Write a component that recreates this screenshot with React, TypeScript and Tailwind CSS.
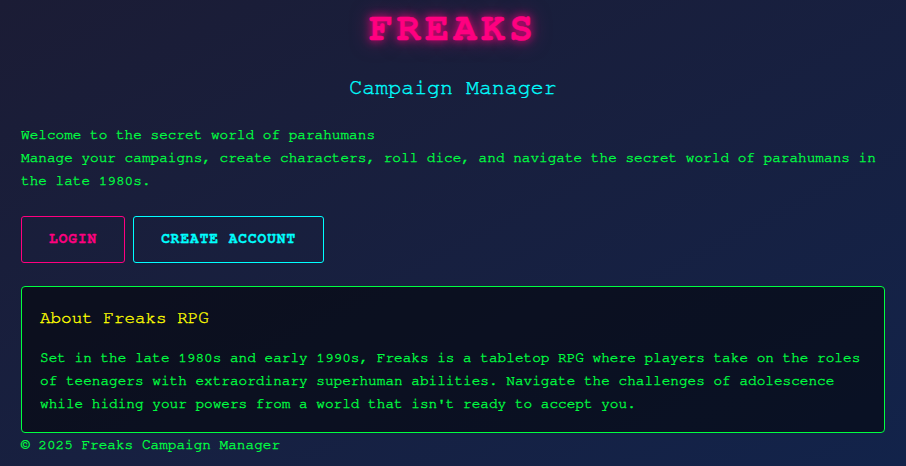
export default function App() {
  return (
    <div className="min-h-screen bg-gradient-to-br from-[#1b1c35] to-[#12234a] font-['FreeMono','Courier_New',monospace] text-[#00ff41]">
      <div className="px-[21px] [-webkit-text-stroke:0.35px_currentColor]">
        <h1 className="pt-[8px] text-center text-[40px] font-bold leading-none tracking-[4px] text-[#ff0080] [text-shadow:0_0_10px_#ff0080,0_0_20px_rgba(255,0,128,0.5)]">
          FREAKS
        </h1>
        <h2 className="mt-[29px] text-center text-[21.6px] leading-none text-[#00ffff]">
          Campaign Manager
        </h2>

        <div className="mt-[24px] text-[14.4px] leading-[23px]">
          <p>Welcome to the secret world of parahumans</p>
          <p>
            Manage your campaigns, create characters, roll dice, and navigate the secret world of
            parahumans in the late 1980s.
          </p>
        </div>

        <div className="mt-[24px] flex gap-[8px]">
          <button className="h-[47px] rounded-[3px] border border-[#ff0080] px-[27px] text-[14.4px] font-bold tracking-[1px] text-[#ff0080]">
            LOGIN
          </button>
          <button className="h-[47px] rounded-[3px] border border-[#00ffff] px-[27px] text-[14.4px] font-bold tracking-[1px] text-[#00ffff]">
            CREATE ACCOUNT
          </button>
        </div>

        <div className="mt-[23px] rounded-[4px] border border-[#00ff41] bg-black/50 px-[18px] pt-[21px] pb-[17px]">
          <h3 className="text-[17.6px] leading-[21px] text-[#ffff00]">About Freaks RPG</h3>
          <p className="mt-[17px] text-[14.4px] leading-[23px]">
            Set in the late 1980s and early 1990s, Freaks is a tabletop RPG where players take on
            the roles of teenagers with extraordinary superhuman abilities. Navigate the challenges
            of adolescence while hiding your powers from a world that isn't ready to accept you.
          </p>
        </div>

        <footer className="text-[14.4px] leading-[23px]">© 2025 Freaks Campaign Manager</footer>
      </div>
    </div>
  )
}
